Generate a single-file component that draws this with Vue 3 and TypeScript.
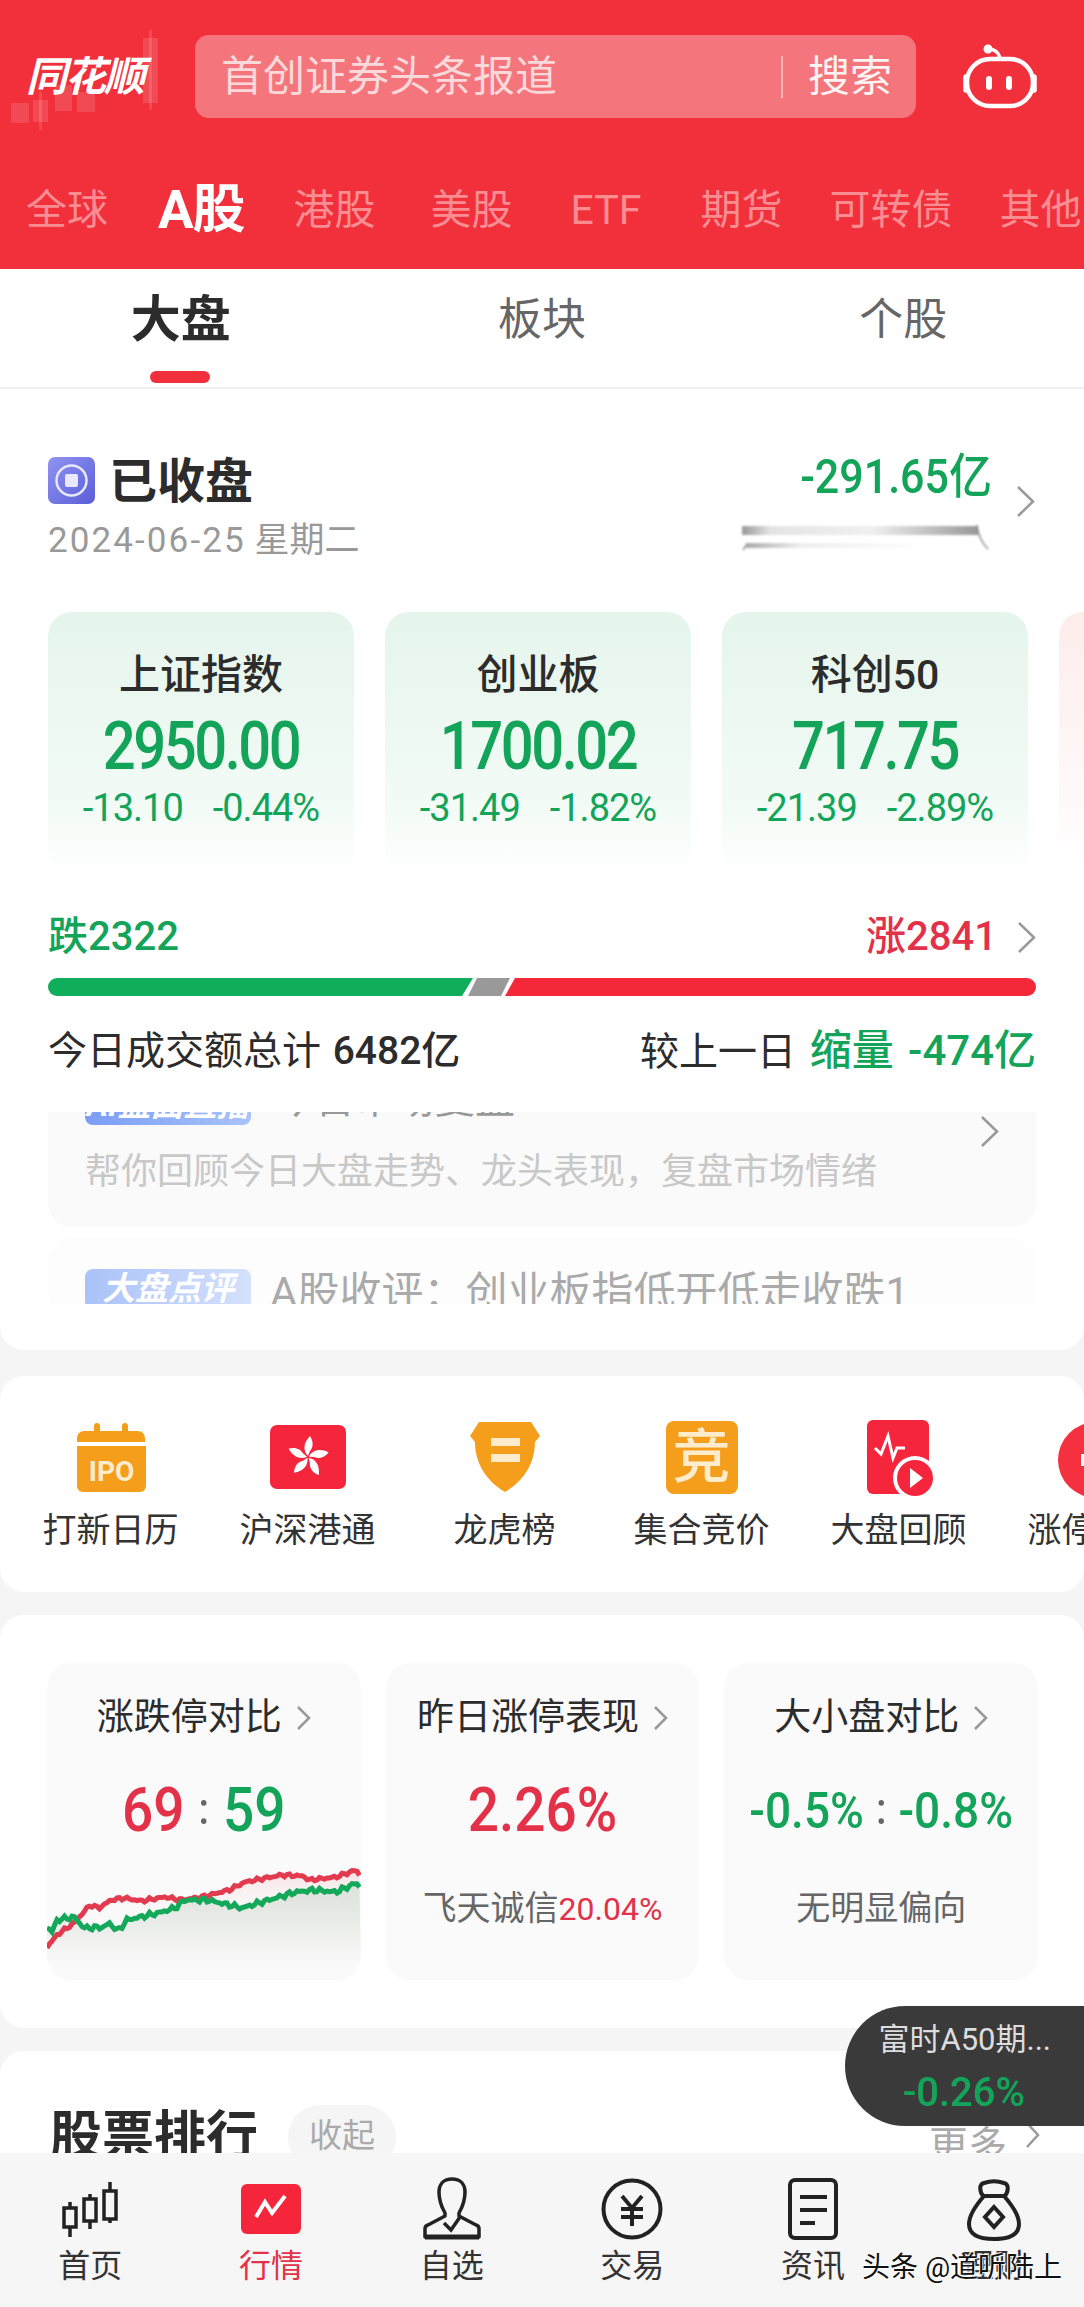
<template>
  <div class="page">
    <header class="hero">
      <div class="hero-row">
        <div class="logo">
          <svg class="logo-bg" width="195" height="140" viewBox="0 0 195 140">
            <g fill="#fff" fill-opacity="0.13">
              <rect x="143" y="18" width="15" height="65" />
              <rect x="149" y="10" width="3" height="80" />
              <rect x="11" y="83" width="18" height="20" />
              <rect x="33" y="80" width="15" height="22" />
              <rect x="39" y="72" width="3" height="38" />
              <rect x="55" y="65" width="17" height="26" />
              <rect x="77" y="72" width="18" height="20" />
            </g>
          </svg>
          <span class="logo-text">同花顺</span>
        </div>
        <div class="search">
          <span class="search-hint">首创证券头条报道</span>
          <span class="search-line" />
          <span class="search-btn">搜索</span>
        </div>
        <div class="robot">
          <svg width="84" height="74" viewBox="0 0 84 74" fill="none" stroke="#fff">
            <path d="M30 5c7 0 11 4 12 9" stroke-width="3.5" stroke-linecap="round" />
            <circle cx="30" cy="5" r="4.5" fill="#fff" stroke="none" />
            <rect x="9" y="15" width="66" height="47" rx="23" stroke-width="4.5" />
            <rect x="6" y="31" width="4" height="17" rx="2" fill="#fff" stroke-width="1.5" />
            <rect x="74" y="31" width="4" height="17" rx="2" fill="#fff" stroke-width="1.5" />
            <rect x="28" y="32" width="6" height="14" rx="3" fill="#fff" stroke="none" />
            <rect x="48" y="32" width="6" height="14" rx="3" fill="#fff" stroke="none" />
          </svg>
        </div>
      </div>
      <nav class="markets">
        <span
          v-for="m in markets"
          :key="m.name"
          class="market"
          :class="{ on: m.on }"
          :style="{ marginLeft: m.left + 'px' }"
        >{{ m.name }}</span>
      </nav>
    </header>

    <div class="subtabs">
      <div v-for="t in subTabs" :key="t" class="subtab" :class="{ on: t === '大盘' }">{{ t }}</div>
    </div>

    <section class="card overview">
      <div class="status">
        <div>
          <div class="status-title">
            <svg width="47" height="47" viewBox="0 0 47 47">
              <defs>
                <linearGradient id="st" x1="0" y1="0" x2="1" y2="1">
                  <stop offset="0" stop-color="#9094f2" />
                  <stop offset="1" stop-color="#5a5ed6" />
                </linearGradient>
              </defs>
              <rect width="47" height="47" rx="7" fill="url(#st)" />
              <circle cx="23.5" cy="23.5" r="15" fill="none" stroke="#e8e9ff" stroke-width="2.5" />
              <rect x="17" y="17" width="13" height="13" rx="2" fill="#e8e9ff" />
            </svg>
            <span>已收盘</span>
          </div>
          <div class="status-date"><span class="date-num">2024-06-25</span> 星期二</div>
        </div>
        <div class="flow">
          <div class="flow-num">-291.65亿</div>
          <svg class="flow-spark" width="250" height="30" viewBox="0 0 250 30" fill="none">
            <defs>
              <linearGradient id="sp" x1="0" y1="0" x2="1" y2="0">
                <stop offset="0" stop-color="#999" />
                <stop offset="0.12" stop-color="#e4e4e4" />
                <stop offset="0.55" stop-color="#f0f0f0" />
                <stop offset="1" stop-color="#999" />
              </linearGradient>
              <linearGradient id="sq" x1="0" y1="0" x2="1" y2="0">
                <stop offset="0" stop-color="#aaa" />
                <stop offset="0.3" stop-color="#eee" />
                <stop offset="1" stop-color="#fff" />
              </linearGradient>
            </defs>
            <rect x="0" y="3" width="236" height="9" fill="url(#sp)" />
            <rect x="4" y="20" width="180" height="5" fill="url(#sq)" />
            <path d="M1 27l4-6" stroke="#999" stroke-width="1.5" />
            <path d="M235 2c1 10 5 18 11 24" stroke="#888" stroke-width="1.5" />
          </svg>
        </div>
        <svg class="chev flow-chev" width="19" height="33" viewBox="0 0 19 33"><path d="M2 2l15 14.5L2 31" /></svg>
      </div>

      <div class="indexes">
        <div v-for="c in indexes" :key="c.name" class="index" :class="{ up: c.up }">
          <div class="index-name">{{ c.name }}</div>
          <div class="index-value">{{ c.value }}</div>
          <div class="index-sub"><span>{{ c.change }}</span><span>{{ c.pct }}</span></div>
        </div>
      </div>

      <div class="breadth">
        <span class="green">跌2322</span>
        <span class="breadth-right">
          <span class="red">涨2841</span>
          <svg class="chev" width="19" height="33" viewBox="0 0 19 33"><path d="M2 2l15 14.5L2 31" /></svg>
        </span>
      </div>
      <div class="bar">
        <div class="bar-down" />
        <div class="bar-flat" />
        <div class="bar-up" />
      </div>
      <div class="volume">
        <span>今日成交额总计 <b class="total">6482亿</b></span>
        <span>较上一日 <b class="green">缩量 -474亿</b></span>
      </div>

      <div class="news-clip">
        <div class="news-a">
          <div class="news-head">
            <span class="badge">AI盘面直播</span>
            <span class="news-title">今日市场复盘</span>
          </div>
          <div class="news-body">帮你回顾今日大盘走势、龙头表现，复盘市场情绪</div>
          <svg class="chev news-chev" width="19" height="33" viewBox="0 0 19 33"><path d="M2 2l15 14.5L2 31" /></svg>
        </div>
        <div class="news-b">
          <span class="badge pale">大盘点评</span>
          <span class="news-line">A股收评：创业板指低开低走收跌1</span>
        </div>
      </div>
    </section>

    <section class="card tools">
      <div v-for="(tool, i) in tools" :key="tool" class="tool">
        <svg v-if="i === 0" width="80" height="80" viewBox="0 0 80 80">
          <path d="M6 20a7 7 0 0 1 7-7h10V8a3 3 0 0 1 6 0v5h22V8a3 3 0 0 1 6 0v5h10a7 7 0 0 1 7 7v4H6z" fill="#f59e1c" />
          <path d="M6 28h69v40a6 6 0 0 1-6 6H12a6 6 0 0 1-6-6z" fill="#f59e1c" />
          <text x="40.5" y="63" text-anchor="middle" class="ipo">IPO</text>
        </svg>
        <svg v-else-if="i === 1" width="80" height="80" viewBox="0 0 80 80">
          <rect x="2" y="7" width="76" height="64" rx="7" fill="#f5263c" />
          <g fill="#fff">
            <path
              v-for="a in [0, 72, 144, 216, 288]"
              :key="a"
              d="M40 38C35 33 35 25 42 18 46 24 45 30 42 33z"
              :transform="`rotate(${a} 40 39)`"
            />
          </g>
        </svg>
        <svg v-else-if="i === 2" width="80" height="80" viewBox="0 0 80 80">
          <path d="M14 4h52l9 14-5 6c0 20-10 38-30 50C20 62 10 44 10 24l-5-6z" fill="#f59e1c" />
          <rect x="26" y="20" width="29" height="8" fill="#ffeccc" />
          <rect x="26" y="36" width="29" height="8" fill="#ffeccc" />
        </svg>
        <div v-else-if="i === 3" class="jing">竞</div>
        <svg v-else-if="i === 4" width="80" height="80" viewBox="0 0 80 80">
          <rect x="8" y="2" width="62" height="74" rx="6" fill="#f5263c" />
          <path d="M16 30l6 6 7-18 5 22 4-10h8" fill="none" stroke="#fff" stroke-width="3" />
          <circle cx="56" cy="60" r="22" fill="#fff" />
          <circle cx="56" cy="60" r="18" fill="#f5263c" />
          <path d="M51 50l13 10-13 10z" fill="#fff" />
        </svg>
        <svg v-else width="80" height="80" viewBox="0 0 80 80">
          <circle cx="40" cy="42" r="38" fill="#f5303f" />
          <path d="M33 28h14v8h8v12h-8v8H33v-8h-8V36h8z" fill="#fff" />
        </svg>
        <div class="tool-name">{{ tool }}</div>
      </div>
    </section>

    <section class="card stats">
      <div class="stat">
        <div class="stat-title">涨跌停对比<svg class="chev small" width="15" height="26" viewBox="0 0 15 26"><path d="M2 2l11 11L2 24" /></svg></div>
        <div class="stat-value"><span class="red">69</span><i>:</i><span class="green">59</span></div>
        <svg class="stat-chart" width="314" height="120" viewBox="0 0 314 120">
          <defs>
            <linearGradient id="fillRed" x1="0" y1="0" x2="0" y2="1">
              <stop offset="0" stop-color="#f5c9cc" stop-opacity="0.5" />
              <stop offset="0.5" stop-color="#fafafa" stop-opacity="0" />
            </linearGradient>
            <linearGradient id="fillGray" x1="0" y1="0" x2="0" y2="1">
              <stop offset="0.1" stop-color="#dfe2dd" />
              <stop offset="0.85" stop-color="#fafafa" />
            </linearGradient>
          </defs>
          <path :d="`M${redLine} L314 120 L0 120Z`" fill="url(#fillRed)" />
          <path :d="`M${greenLine} L314 120 L0 120Z`" fill="url(#fillGray)" />
          <path :d="`M${redLine}`" fill="none" stroke="#e23a4e" stroke-width="5" />
          <path :d="`M${greenLine}`" fill="none" stroke="#14a85a" stroke-width="5" />
        </svg>
      </div>
      <div class="stat">
        <div class="stat-title">昨日涨停表现<svg class="chev small" width="15" height="26" viewBox="0 0 15 26"><path d="M2 2l11 11L2 24" /></svg></div>
        <div class="stat-value"><span class="red">2.26%</span></div>
        <div class="stat-sub">飞天诚信<span class="red num">20.04%</span></div>
      </div>
      <div class="stat">
        <div class="stat-title">大小盘对比<svg class="chev small" width="15" height="26" viewBox="0 0 15 26"><path d="M2 2l11 11L2 24" /></svg></div>
        <div class="stat-value tight"><span class="green">-0.5%</span><i>:</i><span class="green">-0.8%</span></div>
        <div class="stat-sub">无明显偏向</div>
      </div>
    </section>

    <section class="card rank">
      <span class="rank-title">股票排行</span>
      <span class="rank-chip">收起</span>
      <span class="rank-more">更多<svg class="chev" width="15" height="28" viewBox="0 0 15 28"><path d="M2 2l11 12L2 26" /></svg></span>
    </section>

    <div class="float">
      <div class="float-name">富时A50期...</div>
      <div class="float-num">-0.26%</div>
    </div>

    <footer class="tabbar">
      <div v-for="(tab, i) in tabs" :key="tab" class="tab" :class="{ on: i === 1 }">
        <svg width="70" height="64" viewBox="0 0 70 64" fill="none" stroke="#222" stroke-width="3.5">
          <template v-if="i === 0">
            <path d="M15 25v35M35 17v35M55 5v41" />
            <rect x="9" y="31" width="12" height="19" fill="#f6f6f6" />
            <rect x="29" y="22" width="12" height="22" fill="#f6f6f6" />
            <rect x="49" y="14" width="12" height="28" fill="#f6f6f6" />
          </template>
          <template v-else-if="i === 1">
            <rect x="5" y="7" width="60" height="50" rx="6" fill="#f5263c" stroke="none" />
            <path d="M20 40l9-15 7 11 13-17" stroke="#fff" stroke-width="4" />
          </template>
          <template v-else-if="i === 2">
            <path d="M28 36c-4-7-6-14-6-21 0-8 5-13 13-13s13 5 13 13c0 7-2 14-6 21v3l17 9a4 4 0 0 1 3 4v8H8v-8a4 4 0 0 1 3-4l17-9z" stroke-width="3.5" stroke-linejoin="round" />
            <path d="M27 46l7 7 9-13" stroke-width="3.5" />
            <path d="M8 60h54" stroke-width="5" />
          </template>
          <template v-else-if="i === 3">
            <circle cx="35" cy="32" r="28.5" stroke-width="4" />
            <path d="M25 19l10 12 10-12M35 31v18M24 32h22M24 40h22" stroke-width="4" />
          </template>
          <template v-else-if="i === 4">
            <rect x="12" y="3" width="46" height="58" rx="5" stroke-width="4" />
            <path d="M22 20h27M22 33h27M22 46h15" stroke-width="4" />
          </template>
          <template v-else>
            <path d="M25 20c-5-5-5-13 0-14 6-2 14-2 20 0 5 1 5 9 0 14" stroke-width="4" />
            <path d="M25 19h20c7 8 15 18 15 28 0 10-9 15-25 15S10 57 10 47c0-10 8-20 15-28z" stroke-width="4" />
            <path d="M35 30l9 10-9 10-9-10z" stroke-width="4" />
          </template>
        </svg>
        <div class="tab-name">{{ tab }}</div>
      </div>
    </footer>

    <div class="watermark">头条 @道听陆上</div>
  </div>
</template>

<script setup lang="ts">
type Pt = [number, number]

const markets = [
  { name: "全球", left: 26 },
  { name: "A股", left: 50, on: true },
  { name: "港股", left: 49 },
  { name: "美股", left: 55 },
  { name: "ETF", left: 58 },
  { name: "期货", left: 59 },
  { name: "可转债", left: 47 },
  { name: "其他", left: 47 },
]

const subTabs = ["大盘", "板块", "个股"]

const indexes = [
  { name: "上证指数", value: "2950.00", change: "-13.10", pct: "-0.44%" },
  { name: "创业板", value: "1700.02", change: "-31.49", pct: "-1.82%" },
  { name: "科创50", value: "717.75", change: "-21.39", pct: "-2.89%" },
  { name: "", value: "", change: "", pct: "", up: true },
]

const tools = ["打新日历", "沪深港通", "龙虎榜", "集合竞价", "大盘回顾", "涨停复盘"]
const tabs = ["首页", "行情", "自选", "交易", "资讯", "理财"]

// key points read off the reference, jitter added so it looks like a tick line
function jagged(keys: Pt[], amp: number): string {
  const out: string[] = []
  for (let x = 0; x <= 314; x += 2.5) {
    let i = 0
    while (i < keys.length - 2 && keys[i + 1][0] < x) i++
    const [x0, y0] = keys[i]
    const [x1, y1] = keys[i + 1]
    const y = y0 + ((y1 - y0) * (x - x0)) / (x1 - x0)
    const noise = (Math.sin(x * 1.7) + Math.sin(x * 3.1 + 1)) * amp
    out.push(`${x.toFixed(1)} ${(y + noise).toFixed(1)}`)
  }
  return out.join(" L")
}

const redLine = jagged(
  [[0, 87], [10, 75], [27, 63], [43, 45], [52, 48], [64, 40], [77, 38], [94, 41], [118, 37], [134, 40], [155, 37], [182, 30], [198, 22], [235, 15], [256, 16], [262, 20], [289, 17], [309, 10], [314, 17]],
  0.9,
)
const greenLine = jagged(
  [[0, 67], [5, 72], [10, 60], [27, 57], [37, 68], [57, 67], [62, 63], [71, 71], [80, 60], [111, 53], [128, 48], [138, 40], [161, 40], [195, 48], [215, 42], [249, 32], [267, 30], [289, 32], [309, 23], [314, 28]],
  1.3,
)
</script>

<style scoped>
.page {
  position: relative;
  width: 1084px;
  height: 2307px;
  overflow: hidden;
  background: #f5f5f5;
  color: #2c2c2c;
  font-family: Roboto, "Noto Sans CJK SC", sans-serif;
}

.hero {
  height: 269px;
  padding-top: 35px;
  box-sizing: border-box;
  background: #f1303c;
}
.hero-row {
  display: flex;
  height: 83px;
}
.logo {
  position: relative;
  width: 195px;
}
.logo-bg {
  position: absolute;
  left: 0;
  top: -15px;
}
.logo-text {
  position: absolute;
  left: 26px;
  top: 17px;
  color: #fff;
  font-size: 41px;
  font-weight: 700;
  font-style: italic;
  line-height: 50px;
  letter-spacing: -2px;
  white-space: nowrap;
}
.search {
  display: flex;
  align-items: center;
  width: 721px;
  padding: 0 24px 0 26px;
  box-sizing: border-box;
  border-radius: 14px;
  background: #f5757c;
  font-size: 42px;
  line-height: 50px;
}
.search-hint {
  flex: 1;
  color: #fbd9da;
}
.search-line {
  width: 2px;
  height: 42px;
  margin-right: 25px;
  background: #fbb8bb;
}
.search-btn {
  color: #fff3f3;
}
.robot {
  display: flex;
  flex: 1;
  justify-content: center;
  padding-top: 9px;
}
.markets {
  display: flex;
  align-items: center;
  height: 50px;
  margin-top: 67px;
  white-space: nowrap;
}
.market {
  flex: none;
  color: #f98d91;
  font-size: 41px;
  line-height: 50px;
}
.market.on {
  color: #fff;
  font-size: 53px;
  font-weight: 700;
  letter-spacing: -1px;
}

.subtabs {
  display: flex;
  height: 120px;
  box-sizing: border-box;
  border-bottom: 2px solid #f0f0f0;
  background: #fff;
}
.subtab {
  position: relative;
  flex: 1;
  padding-top: 26px;
  color: #666;
  font-size: 44px;
  line-height: 50px;
  text-align: center;
}
.subtab.on {
  color: #2c2c2c;
  font-size: 50px;
  font-weight: 700;
}
.subtab.on::after {
  content: "";
  position: absolute;
  left: 150px;
  top: 102px;
  width: 60px;
  height: 12px;
  border-radius: 6px;
  background: #f1303c;
}

.card {
  border-radius: 24px;
  background: #fff;
}
.overview {
  height: 961px;
  padding-top: 66px;
  box-sizing: border-box;
  border-radius: 0 0 24px 24px;
}
.status {
  display: flex;
  padding: 0 48px;
}
.status-title {
  display: flex;
  align-items: center;
  gap: 14px;
  height: 50px;
  font-size: 48px;
  font-weight: 700;
  line-height: 50px;
}
.status-title span {
  margin-top: 3px;
}
.status-date {
  margin-top: 16px;
  color: #999;
  font-size: 35px;
  line-height: 40px;
}
.date-num {
  letter-spacing: 2.1px;
}
.flow {
  position: relative;
  margin-left: auto;
  text-align: right;
}
.flow-num {
  margin-top: -4px;
  color: #13a45a;
  font-size: 43px;
  font-weight: 500;
  line-height: 50px;
  transform: scaleY(1.1);
}
.flow-spark {
  display: block;
  margin: 22px 0 0 auto;
  filter: blur(1px);
}
.chev {
  fill: none;
  stroke: #999;
  stroke-width: 2.5;
}
.flow-chev {
  align-self: flex-start;
  margin: 30px 1px 0 24px;
}

.indexes {
  display: flex;
  gap: 31px;
  margin-top: 51px;
  padding-left: 48px;
  overflow: hidden;
}
.index {
  flex: none;
  width: 306px;
  height: 262px;
  padding-top: 38px;
  box-sizing: border-box;
  border-radius: 24px;
  background: linear-gradient(#e5f5ec, #f3fbf6 75%, #fff);
  text-align: center;
}
.index.up {
  background: linear-gradient(#fdecec, #fff);
}
.index-name {
  height: 50px;
  font-size: 41px;
  font-weight: 500;
  line-height: 50px;
}
.index-value {
  height: 60px;
  margin-top: 16px;
  color: #13a45a;
  font-size: 58px;
  font-weight: 500;
  line-height: 60px;
  letter-spacing: -2.5px;
  transform: scaleY(1.14);
}
.index-sub {
  display: flex;
  justify-content: center;
  gap: 30px;
  height: 44px;
  margin-top: 10px;
  color: #13a45a;
  font-size: 38px;
  line-height: 44px;
  letter-spacing: -1px;
}

.green {
  color: #13a45a;
}
.red {
  color: #e23148;
}
.breadth {
  display: flex;
  justify-content: space-between;
  height: 44px;
  margin-top: 41px;
  padding: 0 48px;
  font-size: 40px;
  font-weight: 500;
  line-height: 44px;
}
.breadth-right {
  display: flex;
  align-items: center;
  gap: 20px;
}
.bar {
  display: flex;
  height: 18px;
  margin: 19px 48px 0;
}
.bar-down {
  width: 425px;
  border-radius: 9px 0 0 9px;
  background: #10ad5b;
  clip-path: polygon(0 0, 100% 0, calc(100% - 11px) 100%, 0 100%);
}
.bar-flat {
  width: 42px;
  margin-left: -5px;
  background: #999;
  clip-path: polygon(9px 0, 100% 0, calc(100% - 9px) 100%, 0 100%);
}
.bar-up {
  flex: 1;
  margin-left: -5px;
  border-radius: 0 9px 9px 0;
  background: #f5283a;
  clip-path: polygon(10px 0, 100% 0, 100% 100%, 0 100%);
}
.volume {
  display: flex;
  justify-content: space-between;
  height: 50px;
  margin-top: 30px;
  padding: 0 48px;
  font-size: 39px;
  line-height: 50px;
  word-spacing: 4px;
}
.volume b {
  font-size: 42px;
  font-weight: 500;
}
.volume b.total {
  margin-left: -2px;
  font-size: 39px;
}

.news-clip {
  height: 192px;
  margin: 36px 48px 0;
  overflow: hidden;
}
.news-a {
  position: relative;
  height: 167px;
  margin-top: -52px;
  padding: 25px 37px 0;
  box-sizing: border-box;
  border-radius: 24px;
  background: #fafafa;
}
.news-head {
  display: flex;
  gap: 24px;
  height: 40px;
}
.badge {
  width: 166px;
  height: 40px;
  border-radius: 8px;
  background: linear-gradient(90deg, #7b9df5, #a9c3fb);
  color: #fff;
  font-size: 33px;
  font-weight: 700;
  font-style: italic;
  line-height: 40px;
  text-align: center;
  white-space: nowrap;
  overflow: hidden;
}
.badge.pale {
  flex: none;
  background: linear-gradient(90deg, #aac2f8, #d5e1fc);
}
.news-title {
  color: #999;
  font-size: 40px;
  line-height: 30px;
}
.news-body {
  margin-top: 25px;
  color: #c8c8c8;
  font-size: 36px;
  line-height: 44px;
  white-space: nowrap;
}
.news-chev {
  position: absolute;
  right: 37px;
  top: 55px;
}
.news-b {
  display: flex;
  gap: 19px;
  margin-top: 11px;
  padding: 31px 37px 0;
  border-radius: 24px;
  background: #fdfdfd;
}
.news-line {
  color: #aaa;
  font-size: 42px;
  line-height: 48px;
  white-space: nowrap;
}

.tools {
  display: flex;
  height: 216px;
  margin-top: 26px;
  padding: 42px 0 0 12px;
  box-sizing: border-box;
  overflow: hidden;
}
.tool {
  display: flex;
  flex: none;
  flex-direction: column;
  align-items: center;
  width: 197px;
}
.tool-name {
  margin-top: 10px;
  color: #333;
  font-size: 34px;
  line-height: 44px;
  white-space: nowrap;
}
.ipo {
  fill: #ffeccc;
  font-family: Roboto, sans-serif;
  font-size: 28px;
  font-weight: 700;
}
.jing {
  width: 72px;
  height: 73px;
  margin: 3px 0 4px;
  border-radius: 8px;
  background: #f59e1c;
  color: #ffeccc;
  font-size: 58px;
  font-weight: 500;
  line-height: 72px;
  text-align: center;
}

.stats {
  display: flex;
  gap: 25px;
  height: 413px;
  margin-top: 23px;
  padding: 48px 46px 0 47px;
  box-sizing: border-box;
}
.stat {
  flex: 1;
  height: 317px;
  padding-top: 30px;
  box-sizing: border-box;
  overflow: hidden;
  border-radius: 24px;
  background: #fafafa;
  text-align: center;
}
.stat-title {
  display: flex;
  align-items: center;
  justify-content: center;
  gap: 14px;
  height: 50px;
  font-size: 37px;
  line-height: 50px;
}
.chev.small {
  stroke-width: 2.5;
}
.stat-value {
  display: flex;
  align-items: center;
  justify-content: center;
  height: 70px;
  margin-top: 32px;
  font-size: 55px;
  font-weight: 500;
  line-height: 70px;
  transform: scaleY(1.1);
}
.stat-value i {
  margin: 0 14px;
  color: #666;
  font-size: 40px;
  font-style: normal;
}
.stat-value.tight {
  font-size: 46px;
}
.stat-value.tight i {
  margin: 0 12px;
}
.stat-chart {
  display: block;
  margin-top: 15px;
}
.stat-sub {
  height: 44px;
  margin-top: 41px;
  color: #666;
  font-size: 34px;
  line-height: 44px;
}
.stat-sub .num {
  font-size: 32px;
}

.rank {
  position: relative;
  display: flex;
  height: 200px;
  margin-top: 23px;
  padding: 54px 44px 0 50px;
  box-sizing: border-box;
}
.rank-title {
  font-size: 52px;
  font-weight: 700;
  line-height: 64px;
}
.rank-chip {
  width: 108px;
  height: 64px;
  margin-left: 30px;
  border-radius: 32px;
  background: #f5f5f5;
  color: #aaa;
  font-size: 33px;
  line-height: 62px;
  text-align: center;
}
.rank-more {
  display: flex;
  align-items: flex-start;
  gap: 18px;
  margin-left: auto;
  margin-top: 16px;
  color: #aaa;
  font-size: 39px;
  line-height: 50px;
}

.float {
  position: absolute;
  right: 0;
  top: 2006px;
  z-index: 2;
  width: 239px;
  height: 120px;
  padding: 12px 33px 0 0;
  box-sizing: border-box;
  border-radius: 60px 0 0 60px;
  background: #3a3a3a;
  text-align: right;
}
.float-name {
  color: #ddd;
  font-size: 31px;
  line-height: 44px;
  white-space: nowrap;
}
.float-num {
  margin-top: 8px;
  padding-right: 26px;
  color: #13a45a;
  font-size: 40px;
  font-weight: 500;
  line-height: 46px;
}

.tabbar {
  position: absolute;
  left: 0;
  right: 0;
  bottom: 0;
  z-index: 1;
  display: flex;
  height: 154px;
  padding-top: 24px;
  box-sizing: border-box;
  background: #f6f6f6;
}
.tab {
  display: flex;
  flex: 1;
  flex-direction: column;
  align-items: center;
}
.tab-name {
  margin-top: 3px;
  color: #333;
  font-size: 32px;
  line-height: 44px;
}
.tab.on .tab-name {
  color: #e23148;
}
.watermark {
  position: absolute;
  left: 862px;
  top: 2250px;
  z-index: 3;
  color: #111;
  font-size: 28px;
  line-height: 36px;
  white-space: nowrap;
  text-shadow: 1px 1px 1px #fff, -1px -1px 1px #fff;
}
</style>
